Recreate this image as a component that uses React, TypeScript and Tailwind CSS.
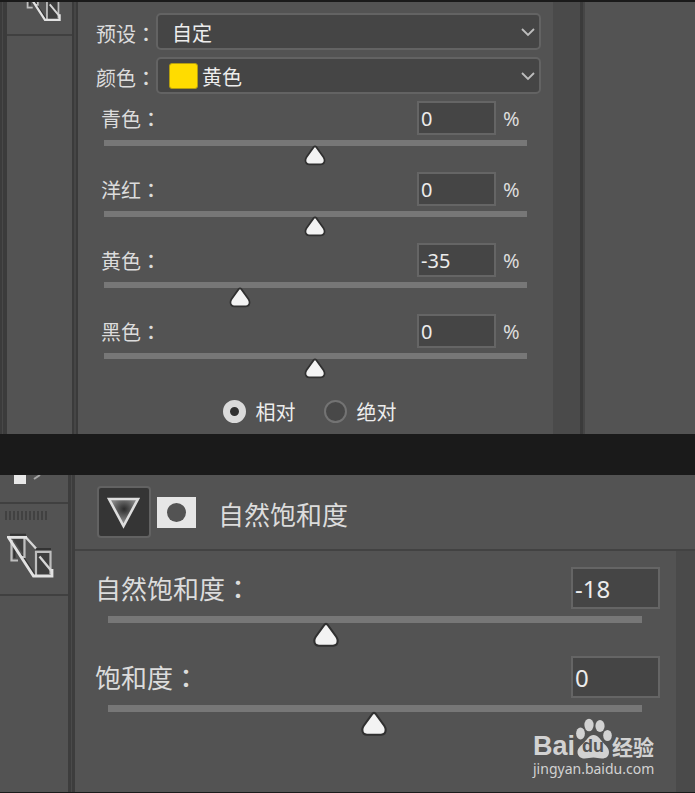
import React, { useState } from 'react';

interface AdjustmentSliderProps {
  id: string;
  label: string;
  initial: number;
  percent?: boolean;
  large?: boolean;
}

const swatches = ['红色', '黄色', '绿色', '青色', '蓝色', '洋红'];

const channels = [
  { id: 'cyan', label: '青色', value: 0 },
  { id: 'magenta', label: '洋红', value: 0 },
  { id: 'yellow', label: '黄色', value: -35 },
  { id: 'black', label: '黑色', value: 0 },
];

// The colon comes from the TC face, where it sits in the middle of its box
const Colon = () => <span className="font-['Noto_Sans_CJK_TC',sans-serif] font-medium">：</span>;

const ThumbIcon = ({ className }: { className: string }) => (
  <svg viewBox="0 0 24 22" className={className} aria-hidden="true">
    <path
      d="M12 1.5 C12.7 1.5 13.2 2 13.6 2.5 L20.800 12.500 C21.600 13.700 22 14.600 22 16 C22 18.800 20.500 20.200 18 20.200 H6 C3.500 20.200 2 18.800 2 16 C2 14.600 2.400 13.700 3.200 12.500 L10.400 2.500 C10.800 2 11.300 1.500 12 1.500 Z"
      fill="#f3f3f3"
      stroke="#303030"
      strokeWidth="1.8"
    />
  </svg>
);

const LibraryIcon = ({ className }: { className: string }) => (
  <svg viewBox="0 0 48 48" className={className} fill="none" aria-hidden="true">
    <path d="M6 7 H16 V22 Z M30 21 H43 V43 H30 Z" fill="#3e3e3e" />
    <path d="M3 2.800 H19 M29 17 H44 M7.500 15 V26 M14 22 L28 43" stroke="#333333" strokeWidth="2" />
    <path d="M11 28.500 H4.500 V8 M17.500 6 V25 H14 M29 43 V19.800 H43.500 V42" stroke="#bebebe" strokeWidth="2.200" />
    <path d="M19 5.500 L29 16.500 M32.500 24.500 L44.500 39" stroke="#d6d6d6" strokeWidth="2.400" />
    <path d="M20 5.400 H1.500 L26.500 44 H45 V37" stroke="#e2e2e2" strokeWidth="2.800" />
  </svg>
);

const Chevron = () => (
  <svg
    viewBox="0 0 14 10"
    className="pointer-events-none absolute right-[6px] top-[14px] h-[10px] w-[14px]"
    fill="none"
    aria-hidden="true"
  >
    <path d="M1 2 L7 8 L13 2" stroke="#bdbdbd" strokeWidth="1.8" />
  </svg>
);

const AdjustmentSlider: React.FC<AdjustmentSliderProps> = ({ id, label, initial, percent, large }) => {
  const [value, setValue] = useState(String(initial));
  const amount = Math.max(-100, Math.min(100, Number(value) || 0));

  return (
    <div className={large ? 'h-[89px]' : 'h-[71px]'}>
      <div className="flex items-center">
        <label htmlFor={id} className={`flex-1 whitespace-nowrap ${large ? 'text-[26px] leading-[42px]' : 'pt-[2px] text-[20px] leading-8'}`}>
          {label}
          <Colon />
        </label>
        <input
          id={id}
          type="text"
          value={value}
          onChange={(e) => setValue(e.target.value)}
          className={`border-2 border-[#656565] bg-[#454545] pl-[2px] font-['Noto_Sans',sans-serif] text-[#ececec] outline-none ${
            large ? 'h-[42px] w-[89px] text-[24px]' : 'h-[34px] w-[79px] text-[20px]'
          }`}
        />
        {percent && <span className="ml-[7px] w-6 pt-[2px] font-['Noto_Sans',sans-serif] text-[20px] leading-8">%</span>}
      </div>
      <div className={`relative ${large ? 'ml-[13px] mr-[18px] mt-[7px] h-8' : 'ml-[3px] mt-[5px] h-[26px]'}`}>
        <div className={`bg-[#777777] ${large ? 'h-[7px]' : 'h-[6px]'}`} />
        <div className={`absolute -translate-x-1/2 ${large ? 'top-[6px]' : 'top-[5px]'}`} style={{ left: `${50 + amount / 2}%` }}>
          <ThumbIcon className={large ? 'mr-[2px] h-[26px] w-[28px]' : 'mr-[2px] h-[21px] w-[23px]'} />
        </div>
        <input
          type="range"
          min={-100}
          max={100}
          value={amount}
          aria-label={label}
          onChange={(e) => setValue(e.target.value)}
          className="absolute inset-0 h-full w-full cursor-pointer opacity-0"
        />
      </div>
    </div>
  );
};

const SelectiveColorPanel = () => {
  const [color, setColor] = useState('黄色');
  const [method, setMethod] = useState('相对');

  return (
    <section className="flex h-[432px] overflow-hidden bg-[#535353]">
      <div className="w-[7px] shrink-0 border-l-2 border-r-4 border-[#3b3b3b] bg-[#484848]" />
      <aside className="w-[65px] shrink-0">
        <div className="h-[34px] overflow-hidden border-b-2 border-[#404040] pl-[17px]">
          <LibraryIcon className="-mt-[17px] h-[38px] w-[38px]" />
        </div>
      </aside>
      <div className="w-[6px] shrink-0 border-x-2 border-[#3b3b3b] bg-[#464646]" />

      <div className="min-w-0 flex-1 pt-[11px]">
        <div className="flex flex-col gap-[7px] pl-[18px] pr-3">
          <div className="flex items-center">
            <label htmlFor="preset" className="w-[60px] whitespace-nowrap pt-1 text-[20px] leading-[33px]">
              预设<Colon />
            </label>
            <div className="relative flex-1">
              <select
                id="preset"
                className="block h-[37px] w-full appearance-none rounded-[5px] border-2 border-[#636363] bg-[#454545] pl-[14px] pt-[2px] text-[20px] text-[#ededed] outline-none"
              >
                <option>自定</option>
                <option>默认值</option>
              </select>
              <Chevron />
            </div>
          </div>
          <div className="flex items-center">
            <label htmlFor="color" className="w-[60px] whitespace-nowrap pt-1 text-[20px] leading-[33px]">
              颜色<Colon />
            </label>
            <div className="relative flex-1">
              <select
                id="color"
                value={color}
                onChange={(e) => setColor(e.target.value)}
                className="block h-[37px] w-full appearance-none rounded-[5px] border-2 border-[#636363] bg-[#454545] pl-[44px] pt-[2px] text-[20px] text-[#ededed] outline-none"
              >
                {swatches.map((name) => (
                  <option key={name}>{name}</option>
                ))}
              </select>
              <span className="pointer-events-none absolute left-[13px] top-[6px] h-[26px] w-[29px] rounded-[3px] border border-[#b49d10] bg-[#ffdc00]" />
              <Chevron />
            </div>
          </div>
        </div>

        <div className="mt-[7px] pl-[23px] pr-[26px]">
          {channels.map((channel) => (
            <AdjustmentSlider key={channel.id} id={channel.id} label={channel.label} initial={channel.value} percent />
          ))}
        </div>

        <div className="mt-[9px] flex justify-center gap-[28px] pr-[12px]">
          {['相对', '绝对'].map((name) => (
            <label key={name} className="flex items-center gap-[10px] text-[20px] text-[#ececec]">
              <input
                type="radio"
                name="method"
                checked={method === name}
                onChange={() => setMethod(name)}
                className="h-[23px] w-[23px] appearance-none rounded-full border-2 border-[#737373] bg-[#484848] checked:border-[7px] checked:border-[#dadada] checked:bg-[#303030]"
              />
              <span className="pt-[2px] leading-8">{name}</span>
            </label>
          ))}
        </div>
      </div>

      <div className="w-[27px] shrink-0 bg-[#4a4a4a]" />
      <div className="w-[5px] shrink-0 border-r-2 border-[#464646] bg-[#3b3b3b]" />
      <div className="w-[110px] shrink-0" />
    </section>
  );
};

const Watermark = () => (
  <div className="absolute bottom-[14px] right-[38px] w-[124px] text-[#d2d2d2]">
    <div className="flex h-[42px] items-end">
      <span className="w-[43px] font-['Liberation_Sans',sans-serif] text-[27px] font-bold leading-[28px]">Bai</span>
      <div className="relative h-[42px] w-[36px]">
        <svg viewBox="0 0 36 42" className="h-full w-full" fill="#d2d2d2" aria-hidden="true">
          <ellipse cx="4.5" cy="15.5" rx="4.400" ry="6" />
          <ellipse cx="13" cy="7" rx="4.600" ry="6.300" />
          <ellipse cx="24" cy="8" rx="4.600" ry="6" />
          <ellipse cx="31.500" cy="17.500" rx="4.300" ry="5.600" />
          <path d="M17.500 17 C22 17 24 21 26.500 24 C29 27 33 29.500 33 34 C33 38.500 30 40.500 26 40.500 C22 40.500 21 39.500 17.500 39.500 C14 39.500 12 40.500 8.500 40.500 C4.500 40.500 1.500 38 1.500 34 C1.500 29.500 6 27 8.500 24 C11.500 21 13 17 17.500 17 Z" />
        </svg>
        <span className="absolute bottom-[5px] left-[6px] font-['Liberation_Sans',sans-serif] text-[18px] font-bold leading-[18px] text-[#535353]">
          du
        </span>
      </div>
      <span className="text-[21px] font-bold leading-[28px]">经验</span>
    </div>
    <a href="#" className="block whitespace-nowrap font-['Noto_Sans',sans-serif] text-[14px] leading-[18px]">
      jingyan.baidu.com
    </a>
  </div>
);

const VibrancePanel = () => (
  <section className="relative flex h-[317px] overflow-hidden bg-[#535353]">
    <aside className="w-[68px] shrink-0">
      <div className="h-[29px] border-b-2 border-[#404040]">
        <svg viewBox="0 0 50 12" className="h-3 w-[50px]" aria-hidden="true">
          <rect x="14" y="0" width="12" height="9" fill="#e8e8e8" />
          <path d="M34 4 L40 0" stroke="#a8a8a8" strokeWidth="2" />
        </svg>
      </div>
      <div className="h-[92px] border-b-2 border-[#404040] pt-[7px]">
        <svg viewBox="0 0 44 9" className="ml-[5px] h-[9px] w-[44px]" aria-hidden="true">
          <path d="M1 0V9M5 0V9M9 0V9M13 0V9M17 0V9M21 0V9M25 0V9M29 0V9M33 0V9M37 0V9M41 0V9" stroke="#414141" strokeWidth="2" />
        </svg>
        <LibraryIcon className="ml-[7px] mt-3 h-[48px] w-[48px]" />
      </div>
    </aside>
    <div className="w-[7px] shrink-0 border-x-[3px] border-[#3d3d3d] bg-[#4a4a4a]" />

    <div className="flex min-w-0 flex-1 flex-col">
      <header className="flex h-[76px] items-center border-b-2 border-[#424242] pl-[22px]">
        <button
          type="button"
          aria-label="调整"
          className="flex h-[52px] w-[54px] items-center justify-center rounded-[4px] border-2 border-[#626262] bg-[#353535]"
        >
          <svg viewBox="0 0 34 34" className="h-[34px] w-[34px]" aria-hidden="true">
            <defs>
              <radialGradient id="vibrance" cx="52%" cy="37%" r="45%">
                <stop offset="0" stopColor="#2c2c2c" />
                <stop offset="0.3" stopColor="#454545" />
                <stop offset="1" stopColor="#858585" />
              </radialGradient>
            </defs>
            <path d="M2 4 H31 L16.500 31 Z" fill="url(#vibrance)" stroke="#dedede" strokeWidth="2.600" />
          </svg>
        </button>
        <button type="button" aria-label="蒙版" className="ml-[6px] flex h-[31px] w-[39px] items-center justify-center bg-[#e6e6e6]">
          <span className="h-[19px] w-[19px] rounded-full bg-[#535353]" />
        </button>
        <h2 className="ml-[22px] whitespace-nowrap pt-1 text-[26px] leading-[42px]">自然饱和度</h2>
      </header>
      <div className="flex flex-1">
        <div className="min-w-0 flex-1 pl-5 pr-4 pt-4">
          <AdjustmentSlider id="vibrance-value" label="自然饱和度" initial={-18} large />
          <AdjustmentSlider id="saturation-value" label="饱和度" initial={0} large />
        </div>
        <div className="w-[19px] shrink-0 bg-[#4a4a4a]" />
      </div>
    </div>
    <Watermark />
  </section>
);

const App = () => (
  <main className="min-h-screen bg-[#1a1a1a] pt-[2px] font-['Noto_Sans_CJK_SC',sans-serif] text-[#dcdcdc]">
    <SelectiveColorPanel />
    <div className="h-[41px]" />
    <VibrancePanel />
  </main>
);

export default App;
